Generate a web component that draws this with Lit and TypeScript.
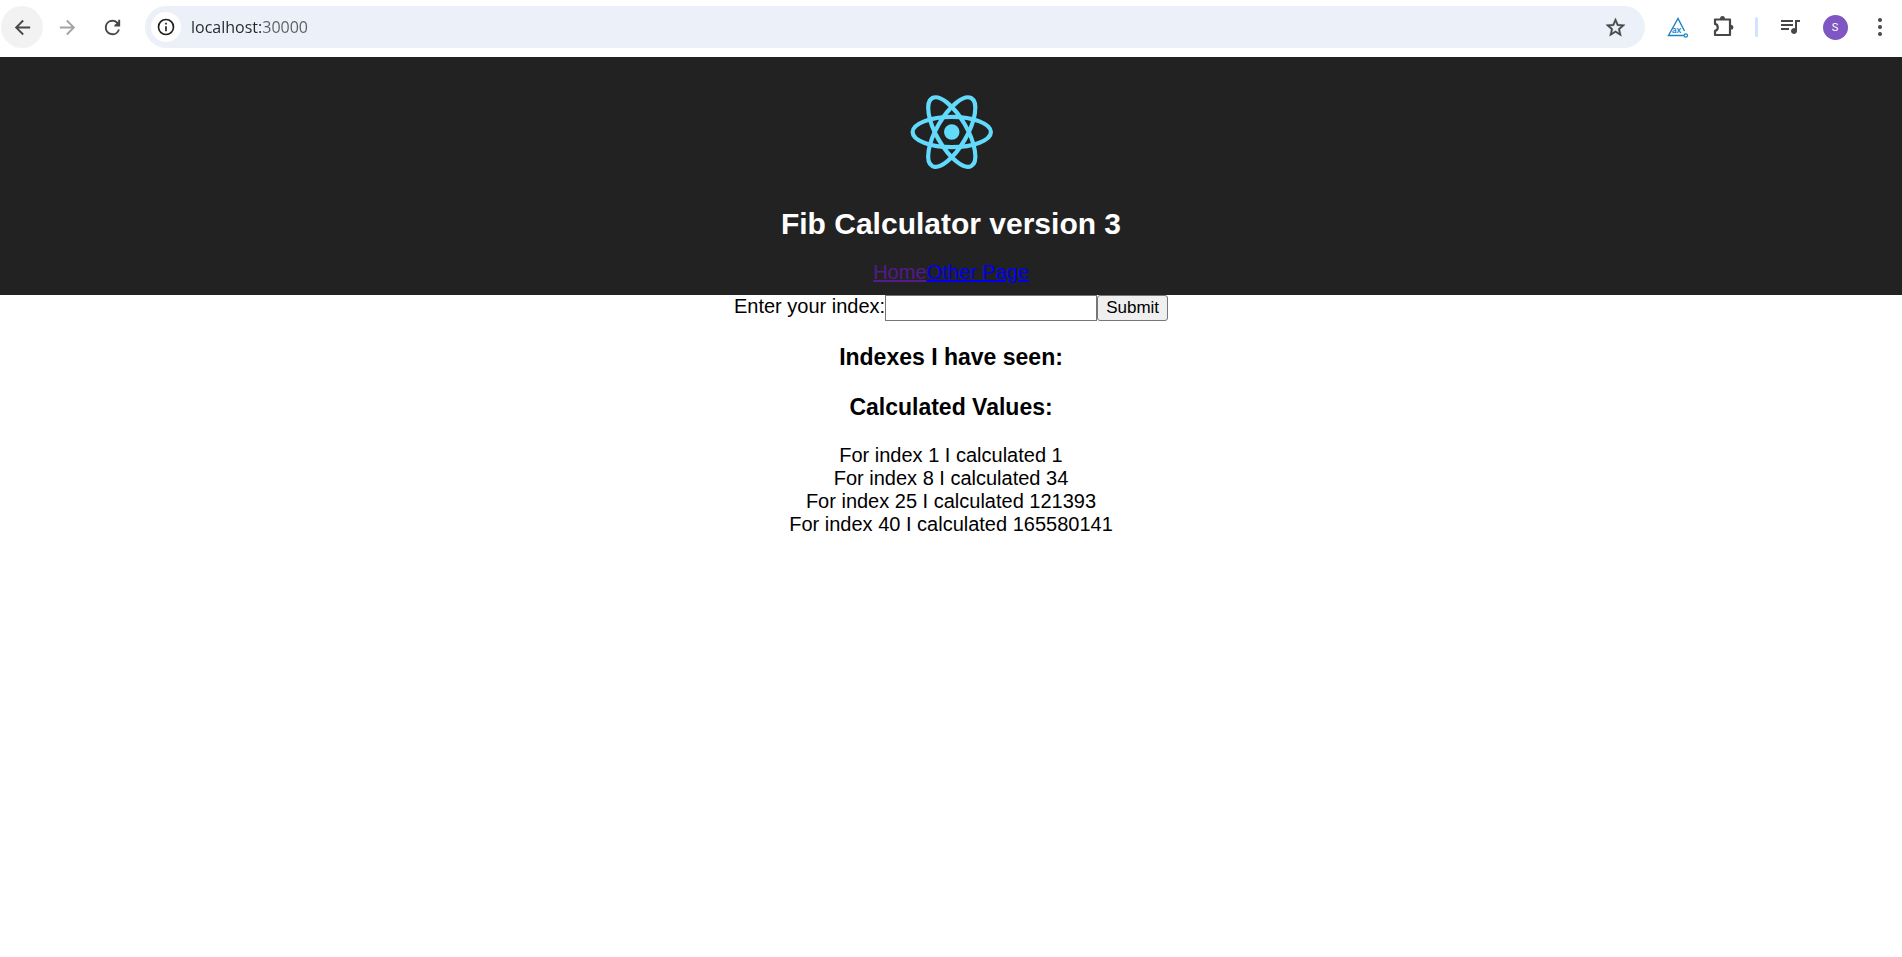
import { LitElement, html, css } from "lit";
import { customElement, property, state } from "lit/decorators.js";

/** Browser toolbar: navigation buttons, address field and extensions. */
@customElement("browser-bar")
export class BrowserBar extends LitElement {
  @property() address = "";

  static styles = css`
    :host {
      display: block;
      background: #fff;
    }
    .bar {
      display: flex;
      align-items: center;
      gap: 3px;
      padding: 6px 1px 9px;
    }
    .tool {
      display: grid;
      place-items: center;
      flex: none;
      width: 42px;
      height: 42px;
      padding: 0;
      border: 0;
      border-radius: 50%;
      background: none;
      color: #474747;
    }
    .tool.hovered {
      background: #f2f2f2;
    }
    .tool:disabled {
      color: #a3a3a3;
    }
    svg {
      display: block;
      fill: currentColor;
    }
    .omnibox {
      display: flex;
      align-items: center;
      flex: 1;
      box-sizing: border-box;
      height: 42px;
      margin: 0 9px;
      padding: 0 9px 0 6px;
      border-radius: 21px;
      background: #ecf0f9;
    }
    .info {
      display: grid;
      place-items: center;
      flex: none;
      width: 30px;
      height: 30px;
      margin: 0 10px 0 0;
      padding: 0;
      border: 0;
      border-radius: 50%;
      background: #fff;
      color: #1f1f1f;
    }
    .address {
      flex: 1;
      min-width: 0;
      height: 28px;
      padding: 0;
      border: 0;
      outline: 0;
      background: linear-gradient(to right, #24262b 70px, #5a5d63 70px);
      background-clip: text;
      color: transparent;
      font: 16px "Open Sans", "Noto Sans", sans-serif;
    }
    .divider {
      flex: none;
      width: 3px;
      height: 20px;
      margin: 0 8px;
      border-radius: 2px;
      background: #d3e3fd;
    }
    .avatar {
      display: grid;
      place-items: center;
      width: 25px;
      height: 25px;
      border-radius: 50%;
      background: #7e57c2;
      color: #fff;
      font: 11px/25px Roboto, sans-serif;
    }
    .ax {
      font: bold 9px Lato, sans-serif;
      fill: #1c83c6;
    }
  `;

  render() {
    return html`
      <nav class="bar" aria-label="Browser">
        <button class="tool hovered" aria-label="Back">
          <svg width="23" height="23" viewBox="0 0 24 24"><path d="M20 11H7.8l5.6-5.6L12 4l-8 8 8 8 1.4-1.4L7.8 13H20z" /></svg>
        </button>
        <button class="tool" aria-label="Forward" disabled>
          <svg width="23" height="23" viewBox="0 0 24 24"><path d="M4 13h12.2l-5.6 5.6L12 20l8-8-8-8-1.4 1.4 5.6 5.6H4z" /></svg>
        </button>
        <button class="tool" aria-label="Reload">
          <svg width="23" height="23" viewBox="0 0 24 24"><path d="M17.65 6.35A7.96 7.96 0 0 0 12 4a8 8 0 1 0 7.73 10h-2.08A6 6 0 1 1 12 6c1.66 0 3.14.69 4.22 1.78L14 9.5v1.5h6V4h-2v2z" /></svg>
        </button>
        <div class="omnibox">
          <button class="info" aria-label="Site information">
            <svg width="20" height="20" viewBox="0 0 24 24"><path d="M11 17h2v-6h-2zM12 2a10 10 0 1 0 0 20 10 10 0 0 0 0-20m0 18a8 8 0 1 1 0-16 8 8 0 0 1 0 16M11 9h2V7h-2z" /></svg>
          </button>
          <input class="address" type="text" aria-label="Address" spellcheck="false" .value=${this.address} />
          <button class="tool" aria-label="Bookmark this page">
            <svg width="23" height="23" viewBox="0 0 24 24"><path stroke="currentColor" stroke-width="0.4" d="M22 9.24l-7.19-.62L12 2 9.19 8.63 2 9.24l5.46 4.73L5.82 21 12 17.27 18.18 21l-1.63-7.03zM12 15.4l-3.76 2.27 1-4.28-3.32-2.88 4.38-.38L12 6.1l1.71 4.04 4.38.38-3.32 2.88 1 4.28z" /></svg>
          </button>
        </div>
        <button class="tool" aria-label="Accessibility checker">
          <svg width="24" height="24" viewBox="0 0 24 24">
            <path d="M18.5 16 12 3.5 2.5 20.5H18" fill="none" stroke="#1c83c6" stroke-width="1.4" />
            <circle cx="19.8" cy="20.5" r="1.7" fill="none" stroke="#1c83c6" stroke-width="1.2" />
            <text class="ax" x="6" y="18">ax</text>
          </svg>
        </button>
        <button class="tool" aria-label="Extensions">
          <svg width="24" height="24" viewBox="0 0 24 24">
            <path d="M4 4.5H19V20H4V15.9A3.6 3.6 0 0 0 4 8.9Z" fill="none" stroke="currentColor" stroke-width="2.2" stroke-linejoin="round" />
            <path d="M9 4a2.5 2.9 0 0 1 5 0zM19.5 9.8a2.9 2.5 0 0 1 0 5z" />
          </svg>
        </button>
        <span class="divider"></span>
        <button class="tool" aria-label="Media controls">
          <svg width="24" height="24" viewBox="0 0 24 24"><path d="M15 5H3v2h12zm0 4H3v2h12zM3 15h8v-2H3zM17 5v8.18a3 3 0 1 0 2 2.82V7h3V5z" /></svg>
        </button>
        <button class="tool" aria-label="Profile"><span class="avatar">S</span></button>
        <button class="tool" aria-label="Menu">
          <svg width="24" height="24" viewBox="0 0 24 24"><circle cx="12" cy="5" r="2" /><circle cx="12" cy="12" r="2" /><circle cx="12" cy="19" r="2" /></svg>
        </button>
      </nav>
    `;
  }
}

/** Form for a Fibonacci index with the values calculated so far. */
@customElement("fib-calculator")
export class FibCalculator extends LitElement {
  @state() private values: [number, number][] = [
    [1, 1],
    [8, 34],
    [25, 121393],
    [40, 165580141],
  ];

  static styles = css`
    :host {
      display: block;
      text-align: center;
    }
    form {
      display: flex;
      justify-content: center;
      align-items: flex-start;
    }
    input,
    button {
      box-sizing: border-box;
      height: 26px;
      margin: 0;
      border: 1px solid #767676;
      color: #000;
      font: 17px "Liberation Sans", Arial, sans-serif;
    }
    input {
      width: 212px;
      padding: 1px 3px;
      background: #fff;
    }
    button {
      padding: 0 8px;
      border-radius: 3px;
      background: #efefef;
    }
    h3 {
      margin: 23px 0;
      font-size: 23px;
      line-height: 27px;
    }
    ul {
      margin: 0;
      padding: 0;
      list-style: none;
    }
  `;

  render() {
    return html`
      <form @submit=${(e: Event) => e.preventDefault()}>
        <label for="index">Enter your index:</label>
        <input id="index" type="text" />
        <button type="submit">Submit</button>
      </form>
      <h3>Indexes I have seen:</h3>
      <h3>Calculated Values:</h3>
      <ul>
        ${this.values.map(([i, v]) => html`<li>For index ${i} I calculated ${v}</li>`)}
      </ul>
    `;
  }
}

@customElement("app-root")
export class AppRoot extends LitElement {
  static styles = css`
    :host {
      display: block;
      min-height: 100vh;
      background: #fff;
      color: #000;
      font: 20px/23px "Liberation Sans", Arial, sans-serif;
    }
    .header {
      display: flex;
      flex-direction: column;
      align-items: center;
      padding: 25px 20px 11px;
      background: #222;
    }
    .logo {
      display: block;
      height: 100px;
      margin-bottom: 5px;
    }
    .title {
      margin: 20px 0;
      color: #fff;
      font-size: 30px;
      line-height: 34px;
    }
    .links {
      display: flex;
    }
    .link {
      color: #0000ee;
    }
    .link.visited {
      color: #551a8b;
    }
  `;

  render() {
    return html`
      <browser-bar address="localhost:30000"></browser-bar>
      <header class="header">
        <svg class="logo" viewBox="0 0 842 595" role="img" aria-label="logo">
          <g fill="none" stroke="#61dafb" stroke-width="25">
            <ellipse cx="427" cy="298" rx="233" ry="90" />
            <ellipse cx="427" cy="298" rx="233" ry="90" transform="rotate(60 427 298)" />
            <ellipse cx="427" cy="298" rx="233" ry="90" transform="rotate(120 427 298)" />
          </g>
          <circle cx="427" cy="298" r="46" fill="#61dafb" />
        </svg>
        <h1 class="title">Fib Calculator version 3</h1>
        <nav class="links" aria-label="Pages">
          <a class="link visited" href="#/">Home</a><a class="link" href="#/otherpage">Other Page</a>
        </nav>
      </header>
      <main><fib-calculator></fib-calculator></main>
    `;
  }
}
